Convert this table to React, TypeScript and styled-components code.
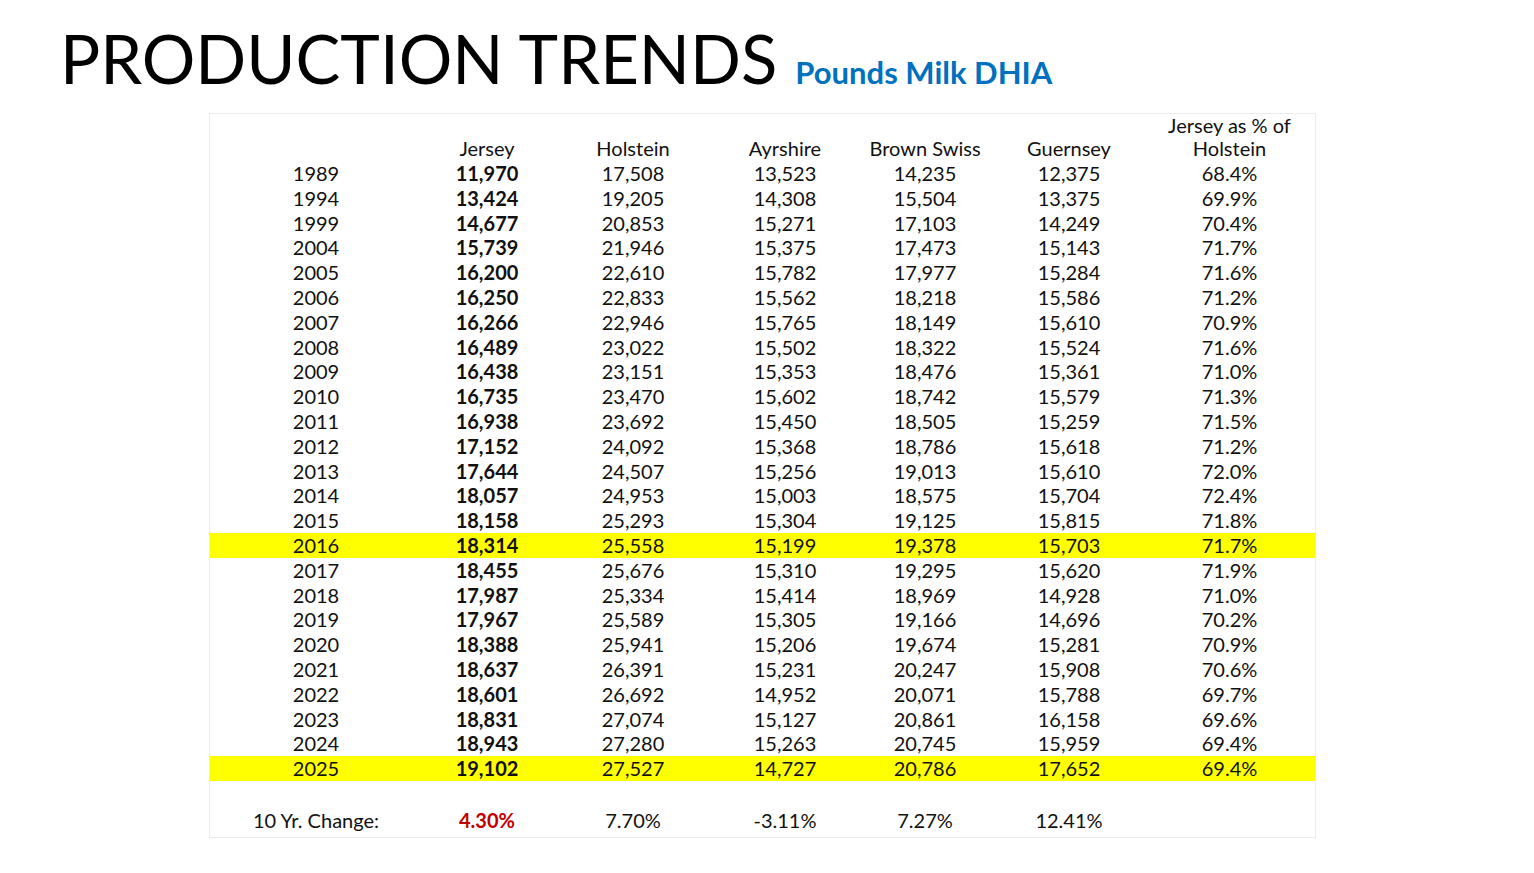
import * as React from "react";
import styled, { createGlobalStyle } from "styled-components";

const GlobalStyle = createGlobalStyle`
  html, body {
    margin: 0;
    padding: 0;
    background: #ffffff;
    font-family: "Lato", "Noto Sans", sans-serif;
    color: #111111;
  }
`;

const Page = styled.div`
  width: 1534px;
  height: 873px;
  box-sizing: border-box;
  padding: 18px 0 0 60px;
`;

const TitleRow = styled.div`
  display: flex;
  align-items: baseline;
  gap: 18px;
  height: 95px;
`;

const Title = styled.h1`
  margin: 0;
  font-size: 67px;
  font-weight: 400;
  line-height: 80px;
  color: #000000;
`;

const SubTitle = styled.span`
  font-size: 31px;
  font-weight: 700;
  color: #0070c0;
`;

const Table = styled.div`
  margin-left: 149px;
  width: 1107px;
  border: 1px solid #ececec;
  box-sizing: border-box;
  padding-bottom: 4px;
`;

const cols = "212px 130px 162px 142px 138px 150px 1fr";

const HeaderRow = styled.div`
  display: grid;
  grid-template-columns: ${cols};
  grid-template-rows: 45px;
  align-items: end;
  font-size: 20px;
  line-height: 22.5px;
  height: 47px;
  box-sizing: border-box;
  padding-bottom: 2px;
`;

const Row = styled.div<{ $hl?: boolean }>`
  display: grid;
  grid-template-columns: ${cols};
  height: 24.8px;
  align-items: center;
  font-size: 20px;
  line-height: 24.8px;
  background: ${(p) => (p.$hl ? "#ffff00" : "transparent")};
`;

const Cell = styled.div<{ $bold?: boolean; $red?: boolean }>`
  text-align: center;
  font-weight: ${(p) => (p.$bold ? 700 : 400)};
  color: ${(p) => (p.$red ? "#c00000" : "#111111")};
`;

const Spacer = styled.div`
  height: 27.5px;
`;

const rows: string[][] = [
  ["1989", "11,970", "17,508", "13,523", "14,235", "12,375", "68.4%"],
  ["1994", "13,424", "19,205", "14,308", "15,504", "13,375", "69.9%"],
  ["1999", "14,677", "20,853", "15,271", "17,103", "14,249", "70.4%"],
  ["2004", "15,739", "21,946", "15,375", "17,473", "15,143", "71.7%"],
  ["2005", "16,200", "22,610", "15,782", "17,977", "15,284", "71.6%"],
  ["2006", "16,250", "22,833", "15,562", "18,218", "15,586", "71.2%"],
  ["2007", "16,266", "22,946", "15,765", "18,149", "15,610", "70.9%"],
  ["2008", "16,489", "23,022", "15,502", "18,322", "15,524", "71.6%"],
  ["2009", "16,438", "23,151", "15,353", "18,476", "15,361", "71.0%"],
  ["2010", "16,735", "23,470", "15,602", "18,742", "15,579", "71.3%"],
  ["2011", "16,938", "23,692", "15,450", "18,505", "15,259", "71.5%"],
  ["2012", "17,152", "24,092", "15,368", "18,786", "15,618", "71.2%"],
  ["2013", "17,644", "24,507", "15,256", "19,013", "15,610", "72.0%"],
  ["2014", "18,057", "24,953", "15,003", "18,575", "15,704", "72.4%"],
  ["2015", "18,158", "25,293", "15,304", "19,125", "15,815", "71.8%"],
  ["2016", "18,314", "25,558", "15,199", "19,378", "15,703", "71.7%"],
  ["2017", "18,455", "25,676", "15,310", "19,295", "15,620", "71.9%"],
  ["2018", "17,987", "25,334", "15,414", "18,969", "14,928", "71.0%"],
  ["2019", "17,967", "25,589", "15,305", "19,166", "14,696", "70.2%"],
  ["2020", "18,388", "25,941", "15,206", "19,674", "15,281", "70.9%"],
  ["2021", "18,637", "26,391", "15,231", "20,247", "15,908", "70.6%"],
  ["2022", "18,601", "26,692", "14,952", "20,071", "15,788", "69.7%"],
  ["2023", "18,831", "27,074", "15,127", "20,861", "16,158", "69.6%"],
  ["2024", "18,943", "27,280", "15,263", "20,745", "15,959", "69.4%"],
  ["2025", "19,102", "27,527", "14,727", "20,786", "17,652", "69.4%"],
];

const highlighted = ["2016", "2025"];

export default function App() {
  return (
    <Page>
      <GlobalStyle />
      <TitleRow>
        <Title>PRODUCTION TRENDS</Title>
        <SubTitle>Pounds Milk DHIA</SubTitle>
      </TitleRow>
      <Table>
        <HeaderRow>
          <Cell />
          <Cell>Jersey</Cell>
          <Cell>Holstein</Cell>
          <Cell>Ayrshire</Cell>
          <Cell>Brown Swiss</Cell>
          <Cell>Guernsey</Cell>
          <Cell>
            Jersey as % of
            <br />
            Holstein
          </Cell>
        </HeaderRow>
        {rows.map((r) => (
          <Row key={r[0]} $hl={highlighted.includes(r[0])}>
            {r.map((v, i) => (
              <Cell key={i} $bold={i === 1}>
                {v}
              </Cell>
            ))}
          </Row>
        ))}
        <Spacer />
        <Row>
          <Cell>10 Yr. Change:</Cell>
          <Cell $bold $red>
            4.30%
          </Cell>
          <Cell>7.70%</Cell>
          <Cell>-3.11%</Cell>
          <Cell>7.27%</Cell>
          <Cell>12.41%</Cell>
          <Cell />
        </Row>
      </Table>
    </Page>
  );
}
